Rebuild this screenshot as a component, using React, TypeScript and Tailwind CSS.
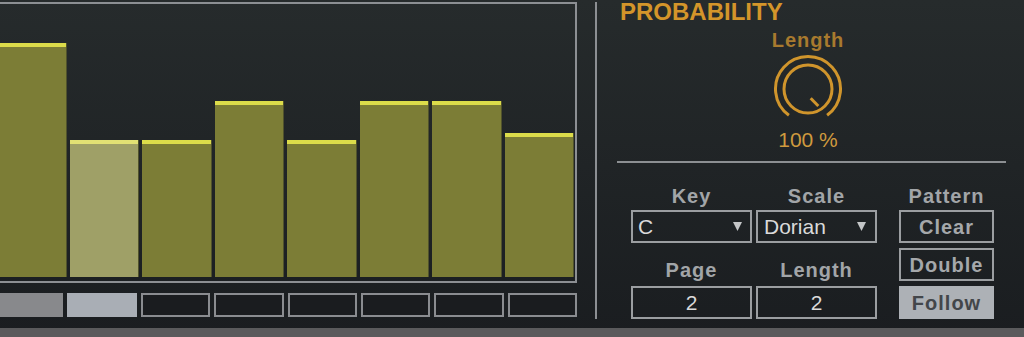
import React from "react";

// Hauteurs des pas (px), le pas 2 est sélectionné
const steps = [234, 137, 137, 176, 137, 176, 176, 144];
const selected = 1;

// État des cases sous les barres
const pads = ["dim", "on", "off", "off", "off", "off", "off", "off"];

const Knob = () => (
  <svg width="70" height="70" viewBox="0 0 70 70" fill="none">
    <path
      d="M 15.9 61.3 A 32.5 32.5 0 1 1 54.1 61.3"
      stroke="#d0952c"
      strokeWidth="3"
    />
    <circle cx="35" cy="35" r="24" stroke="#d0952c" strokeWidth="3" />
    <line x1="37.7" y1="44.3" x2="45.3" y2="52" stroke="#d0952c" strokeWidth="3" />
  </svg>
);

const Arrow = () => (
  <svg width="9" height="11" viewBox="0 0 9 11">
    <polygon points="0,1 9,1 4.5,10" fill="#c4c6c8" />
  </svg>
);

const Label = ({ children }: { children: React.ReactNode }) => (
  <div className="h-[20px] text-[20px] leading-[20px] font-bold tracking-[1px] text-[#a2a5a8] text-center">
    {children}
  </div>
);

const Box = ({ children, className = "" }: { children: React.ReactNode; className?: string }) => (
  <div className={`h-[33px] border-2 border-[#9b9ea1] flex items-center ${className}`}>{children}</div>
);

export default function App() {
  return (
    <div className="w-[1024px] h-[337px] overflow-hidden flex flex-col bg-linear-to-b from-[#262b2c] to-[#1a1d20] font-['Liberation_Sans',Arial,sans-serif]">
      <div className="flex flex-1">
        {/* Séquenceur */}
        <div className="w-[595px] shrink-0">
          <div className="mt-[2px] ml-[-5px] w-[582px] h-[281px] border-2 border-[#8c8f93] flex items-end gap-[3px] pb-[4px] pr-[1px]">
            {steps.map((h, i) => (
              <div
                key={i}
                className={`flex-1 flex flex-col border-r border-[#50522c] ${
                  i === selected ? "bg-[#9fa067]" : "bg-[#7c7d36]"
                }`}
                style={{ height: h }}
              >
                <div className={`h-[4px] ${i === selected ? "bg-[#e2e174]" : "bg-[#dcdc4a]"}`} />
              </div>
            ))}
          </div>
          <div className="mt-[10px] ml-[-6px] w-[583px] h-[24px] grid grid-cols-8 gap-[4px]">
            {pads.map((p, i) => (
              <div
                key={i}
                className={
                  p === "dim"
                    ? "bg-[#88898c]"
                    : p === "on"
                    ? "bg-[#a9aeb5]"
                    : "border-2 border-[#8a8c90] bg-[#1a1c1f]"
                }
              />
            ))}
          </div>
        </div>

        {/* Séparateur vertical */}
        <div className="w-[2px] h-[317px] mt-[2px] bg-[#8c8f93] shrink-0" />

        {/* Panneau de droite */}
        <div className="flex-1 flex flex-col">
          <div className="pl-[23px] h-[24px] text-[24px] leading-[24px] font-bold text-[#d4952a]">
            PROBABILITY
          </div>
          <div className="w-[422px] flex flex-col items-center">
            <div className="mt-[6px] h-[20px] text-[20px] leading-[20px] font-bold tracking-[1px] text-[#a87a2e]">
              Length
            </div>
            <div className="mt-[4px]">
              <Knob />
            </div>
            <div className="mt-[5px] h-[21px] text-[21px] leading-[21px] text-[#cf9a3e]">100 %</div>
          </div>
          <div className="mt-[11px] ml-[20px] w-[389px] h-[2px] bg-[#8c8f92]" />

          <div className="mt-[23px] ml-[34px] flex">
            <div className="w-[121px] flex flex-col">
              <Label>Key</Label>
              <Box className="mt-[4px] pl-[5px] pr-[8px] justify-between">
                <span className="text-[21px] text-[#dadada]">C</span>
                <Arrow />
              </Box>
              <div className="mt-[17px]">
                <Label>Page</Label>
              </div>
              <Box className="mt-[6px] justify-center">
                <span className="text-[21px] text-[#dadada]">2</span>
              </Box>
            </div>
            <div className="w-[121px] ml-[4px] flex flex-col">
              <Label>Scale</Label>
              <Box className="mt-[4px] pl-[6px] pr-[9px] justify-between">
                <span className="text-[21px] text-[#dadada]">Dorian</span>
                <Arrow />
              </Box>
              <div className="mt-[17px]">
                <Label>Length</Label>
              </div>
              <Box className="mt-[6px] justify-center">
                <span className="text-[21px] text-[#dadada]">2</span>
              </Box>
            </div>
            <div className="w-[95px] ml-[22px] flex flex-col">
              <Label>Pattern</Label>
              <Box className="mt-[4px] justify-center">
                <span className="text-[20px] font-bold tracking-[1px] text-[#a5a8ab]">Clear</span>
              </Box>
              <Box className="mt-[5px] justify-center">
                <span className="text-[20px] font-bold tracking-[1px] text-[#a5a8ab]">Double</span>
              </Box>
              <Box className="mt-[5px] justify-center bg-[#adb1b6] border-[#adb1b6]">
                <span className="text-[20px] font-bold tracking-[1px] text-[#43464a]">Follow</span>
              </Box>
            </div>
          </div>
        </div>
      </div>
      <div className="h-[9px] bg-[#5a5a5c] shrink-0" />
    </div>
  );
}
